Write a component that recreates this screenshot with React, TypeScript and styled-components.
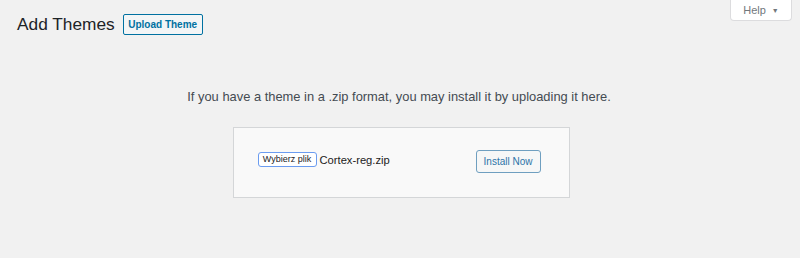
import React from 'react';
import styled, { createGlobalStyle } from 'styled-components';

const GlobalStyle = createGlobalStyle`
  html, body {
    margin: 0;
    padding: 0;
    background: #f1f1f1;
    font-family: "Liberation Sans", Arial, sans-serif;
    color: #23282d;
  }
`;

const Page = () => {
  return (
    <PageContainer>
      <TopBar>
        <TitleRow>
          <Title>Add Themes</Title>
          <HeaderButton>Upload Theme</HeaderButton>
        </TitleRow>
        <HelpTab>
          Help <Caret>▼</Caret>
        </HelpTab>
      </TopBar>
      <UploadSection>
        <Intro>
          If you have a theme in a .zip format, you may install it by uploading it here.
        </Intro>
        <UploadForm>
          <FileField>
            <FileButton>Wybierz plik</FileButton>
            <FileName>Cortex-reg.zip</FileName>
          </FileField>
          <InstallButton>Install Now</InstallButton>
        </UploadForm>
      </UploadSection>
    </PageContainer>
  );
};

const PageContainer = styled.div`
  width: 800px;
  height: 258px;
  box-sizing: border-box;
  padding-left: 17px;
  padding-right: 8px;
`;

const TopBar = styled.div`
  display: flex;
  justify-content: space-between;
  align-items: flex-start;
`;

const TitleRow = styled.div`
  display: flex;
  align-items: center;
  gap: 8px;
  padding-top: 14px;
`;

const Title = styled.h1`
  margin: 0;
  font-size: 17.3px;
  font-weight: 400;
  line-height: 21px;
  color: #1d2327;
`;

const HeaderButton = styled.button`
  box-sizing: border-box;
  height: 21px;
  width: 80px;
  padding: 0;
  border: 1px solid #0071a1;
  border-radius: 2px;
  background: #f3f5f6;
  color: #0071a1;
  font-family: "Liberation Sans", Arial, sans-serif;
  font-size: 10px;
  font-weight: 700;
  cursor: pointer;
`;

const HelpTab = styled.div`
  box-sizing: border-box;
  width: 62px;
  height: 21px;
  display: flex;
  align-items: center;
  justify-content: center;
  gap: 6px;
  background: #fff;
  border: 1px solid #dcdcde;
  border-top: none;
  border-radius: 0 0 4px 4px;
  color: #72777c;
  font-size: 11px;
`;

const Caret = styled.span`
  font-size: 7px;
  color: #72777c;
`;

const UploadSection = styled.div`
  display: flex;
  flex-direction: column;
  align-items: center;
  padding-top: 52px;
  margin-left: -17px;
  margin-right: -8px;
`;

const Intro = styled.p`
  margin: 0;
  font-size: 12.9px;
  line-height: 20px;
  color: #444b52;
  padding-right: 2px;
`;

const UploadForm = styled.div`
  box-sizing: border-box;
  width: 337px;
  height: 71px;
  margin-top: 20px;
  margin-left: 2px;
  display: flex;
  align-items: center;
  justify-content: space-between;
  padding: 0 28px 2px 24px;
  background: #f9f9f9;
  border: 1px solid #d4d6d8;
`;

const FileField = styled.div`
  display: flex;
  align-items: center;
  gap: 3px;
  margin-top: -4px;
`;

const FileButton = styled.button`
  box-sizing: border-box;
  height: 15px;
  width: 59px;
  padding: 0;
  border: 1px solid #6b9cf0;
  border-radius: 3px;
  background: #fff;
  color: #222;
  font-family: "Liberation Sans", Arial, sans-serif;
  font-size: 9px;
  line-height: 13px;
`;

const FileName = styled.span`
  font-size: 11.2px;
  color: #222;
`;

const InstallButton = styled.button`
  box-sizing: border-box;
  height: 23px;
  width: 65px;
  padding: 0;
  border: 1px solid #6f9fc0;
  border-radius: 3px;
  background: #f6f7f7;
  color: #2d74a8;
  font-family: "Liberation Sans", Arial, sans-serif;
  font-size: 10px;
`;

const App = (): JSX.Element => (
  <>
    <GlobalStyle />
    <Page />
  </>
);

export default App;
